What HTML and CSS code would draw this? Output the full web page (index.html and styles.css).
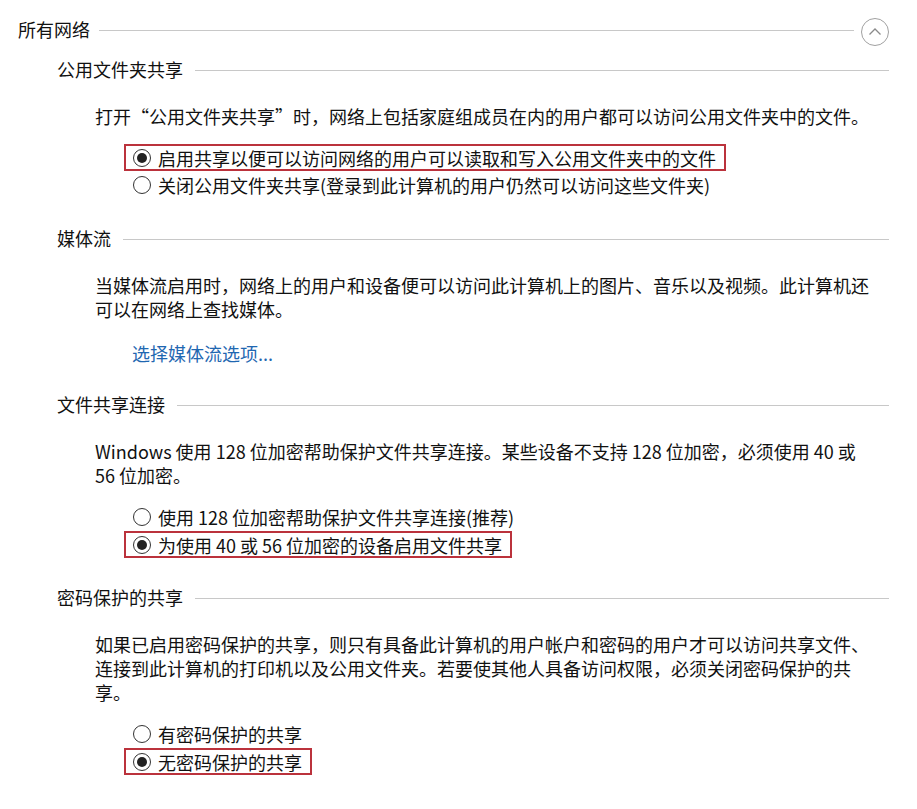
FILE: index.html
```html
<!DOCTYPE html>
<html lang="zh-CN">
<head>
  <meta charset="UTF-8" />
  <title>高级共享设置 - 所有网络</title>
  <link rel="stylesheet" href="styles.css">
</head>
<body>

<div class="group-head">
  <span class="group-title">所有网络</span>
  <span class="rule"></span>
  <button class="collapse" aria-label="折叠">
    <svg width="28" height="28" viewBox="0 0 28 28">
      <circle cx="14" cy="14" r="13.5" fill="none" stroke="#a0a0a0" stroke-width="1"/>
      <path d="M8.5 16.5 L14 11 L19.5 16.5" fill="none" stroke="#8a8a8a" stroke-width="1.3"/>
    </svg>
  </button>
</div>

<section class="section">
  <div class="section-head">
    <span>公用文件夹共享</span>
    <span class="rule"></span>
  </div>
  <div class="section-body">
    <p class="desc">打开“公用文件夹共享”时，网络上包括家庭组成员在内的用户都可以访问公用文件夹中的文件。</p>
    <div class="options">
      <label class="option marked"><span class="radio checked"></span>启用共享以便可以访问网络的用户可以读取和写入公用文件夹中的文件</label>
      <label class="option"><span class="radio"></span>关闭公用文件夹共享(登录到此计算机的用户仍然可以访问这些文件夹)</label>
    </div>
  </div>
</section>

<section class="section">
  <div class="section-head">
    <span>媒体流</span>
    <span class="rule"></span>
  </div>
  <div class="section-body">
    <p class="desc">当媒体流启用时，网络上的用户和设备便可以访问此计算机上的图片、音乐以及视频。此计算机还可以在网络上查找媒体。</p>
    <a class="link" href="#">选择媒体流选项...</a>
  </div>
</section>

<section class="section">
  <div class="section-head">
    <span>文件共享连接</span>
    <span class="rule"></span>
  </div>
  <div class="section-body">
    <p class="desc">Windows 使用 128 位加密帮助保护文件共享连接。某些设备不支持 128 位加密，必须使用 40 或 56 位加密。</p>
    <div class="options">
      <label class="option"><span class="radio"></span>使用 128 位加密帮助保护文件共享连接(推荐)</label>
      <label class="option marked"><span class="radio checked"></span>为使用 40 或 56 位加密的设备启用文件共享</label>
    </div>
  </div>
</section>

<section class="section">
  <div class="section-head">
    <span>密码保护的共享</span>
    <span class="rule"></span>
  </div>
  <div class="section-body">
    <p class="desc">如果已启用密码保护的共享，则只有具备此计算机的用户帐户和密码的用户才可以访问共享文件、连接到此计算机的打印机以及公用文件夹。若要使其他人具备访问权限，必须关闭密码保护的共享。</p>
    <div class="options">
      <label class="option"><span class="radio"></span>有密码保护的共享</label>
      <label class="option marked"><span class="radio checked"></span>无密码保护的共享</label>
    </div>
  </div>
</section>

</body>
</html>
```

FILE: styles.css
```css
* {
  margin: 0;
  padding: 0;
  box-sizing: border-box;
}

body {
  font-family: "Noto Sans CJK SC", "Noto Sans", sans-serif;
  font-size: 18px;
  line-height: 24px;
  color: #111;
  background: #fff;
  padding: 17px 28px 0 18px;
}

.rule {
  flex: 1;
  height: 1px;
  background: #c8c8c8;
  margin-top: 3px;
}

.group-head {
  display: flex;
  align-items: center;
  height: 24px;
}

.group-head .rule {
  margin-left: 9px;
}

.collapse {
  flex: none;
  width: 28px;
  height: 28px;
  margin-left: 7px;
  margin-top: 5px;
  border: none;
  background: none;
  display: flex;
}

.section {
  margin-left: 39px;
  margin-top: 16px;
}

.section + .section {
  margin-top: 27px;
}

.section-head {
  display: flex;
  align-items: center;
  height: 24px;
}

.section-head .rule {
  margin-left: 12px;
}

.section-body {
  padding-left: 38px;
}

.desc {
  margin-top: 23px;
  max-width: 778px;
}

.options {
  margin-top: 16px;
  margin-left: 38px;
  display: flex;
  flex-direction: column;
  align-items: flex-start;
}

.option {
  display: flex;
  align-items: center;
  height: 28px;
  white-space: nowrap;
}

.option.marked {
  border: 2px solid #bb323c;
  margin-left: -9px;
  padding-left: 7px;
  padding-right: 8px;
  height: 27px;
}

.radio {
  flex: none;
  width: 18px;
  height: 18px;
  border: 1px solid #333;
  border-radius: 50%;
  margin-right: 7px;
  display: flex;
  align-items: center;
  justify-content: center;
}

.radio.checked::after {
  content: "";
  width: 10px;
  height: 10px;
  border-radius: 50%;
  background: #222;
}

.link {
  display: inline-block;
  margin-top: 20px;
  margin-left: 37px;
  color: #1f67b1;
  text-decoration: none;
}
```
